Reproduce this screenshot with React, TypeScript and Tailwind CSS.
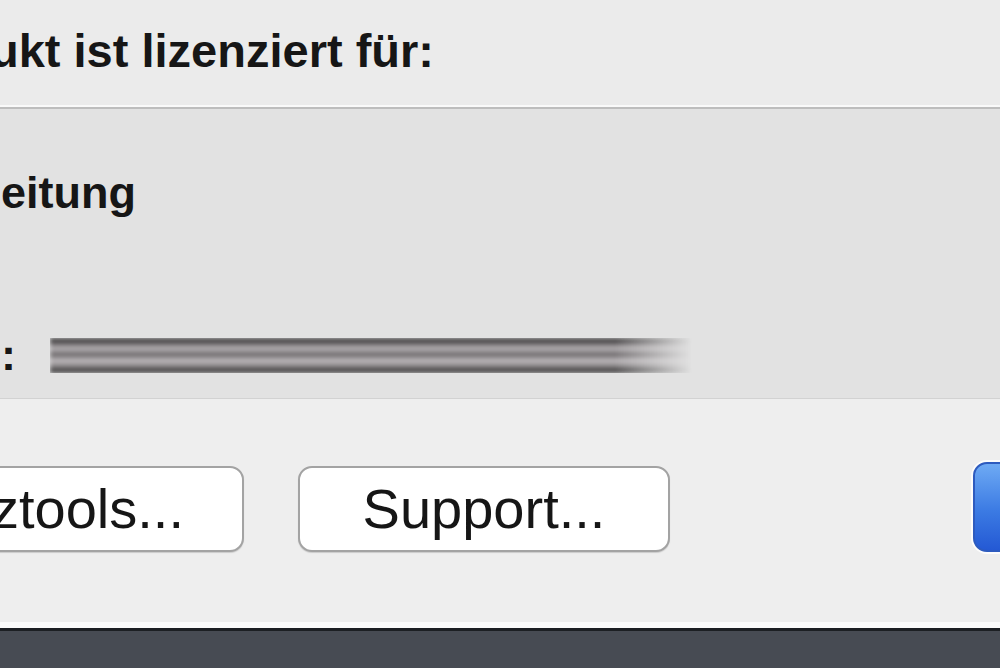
import React from "react";

const font = { fontFamily: '"Liberation Sans", Arial, sans-serif' };

const Redacted: React.FC = () => (
  <div className="h-[35px] w-[642px] [mask-image:linear-gradient(to_right,black_88%,transparent)]">
    <div className="h-full w-full blur-[2px] bg-[linear-gradient(to_bottom,#2e2e2e_0%,#5a5658_12%,#b9b5b8_30%,#6a6668_48%,#c2bec1_64%,#8a8688_80%,#262626_100%)]" />
  </div>
);

const App: React.FC = () => {
  return (
    <div className="w-[1000px] h-[668px] overflow-hidden flex flex-col text-[#161616]" style={font}>
      {/* Kopfzeile */}
      <div className="h-[105px] bg-[#ebebeb] pt-[27px]">
        <p className="-ml-[10px] text-[47px] font-bold leading-none whitespace-nowrap">
          ukt ist lizenziert für:
        </p>
      </div>
      <div className="h-[2px] bg-[#f9f9f9]" />
      <div className="h-[2px] bg-[#bdbdbd]" />

      {/* Lizenzdaten */}
      <div className="h-[289px] bg-[#e2e2e2] flex flex-col">
        <p className="mt-[61px] ml-[1px] text-[45px] font-bold leading-none whitespace-nowrap">eitung</p>
        <div className="mt-[119px] flex items-center gap-[34px]">
          <span className="ml-[1px] text-[45px] font-bold leading-none -mt-[2px]">:</span>
          <Redacted />
        </div>
      </div>
      <div className="h-[1px] bg-[#d2d2d2]" />

      {/* Buttons */}
      <div className="h-[223px] bg-[#eeeeee] flex items-start pt-[67px]">
        <button className="-ml-[69px] h-[86px] px-[58px] flex items-center rounded-[14px] border-2 border-[#a3a3a3] bg-white shadow-[0_1px_1px_rgba(0,0,0,0.15)] text-[56px] leading-none whitespace-nowrap">
          ztools...
        </button>
        <button className="ml-[54px] h-[86px] w-[372px] flex items-center justify-center rounded-[14px] border-2 border-[#a3a3a3] bg-white shadow-[0_1px_1px_rgba(0,0,0,0.15)] text-[56px] leading-none whitespace-nowrap">
          Support...
        </button>
        <div className="flex-1" />
        <button className="-mt-[4px] h-[90px] w-[60px] -mr-[33px] rounded-[14px] border-2 border-[#2d5bbf] bg-[linear-gradient(to_bottom,#6eaaf4,#3b7ae3_55%,#2459d4)] shadow-[0_0_0_2px_rgba(255,255,255,0.8)]" />
      </div>
      <div className="h-[6px] bg-[#fbfbfb]" />
      <div className="h-[3px] bg-[#1c1f23]" />
      <div className="flex-1 bg-[#474b53]" />
    </div>
  );
};

export default App;
